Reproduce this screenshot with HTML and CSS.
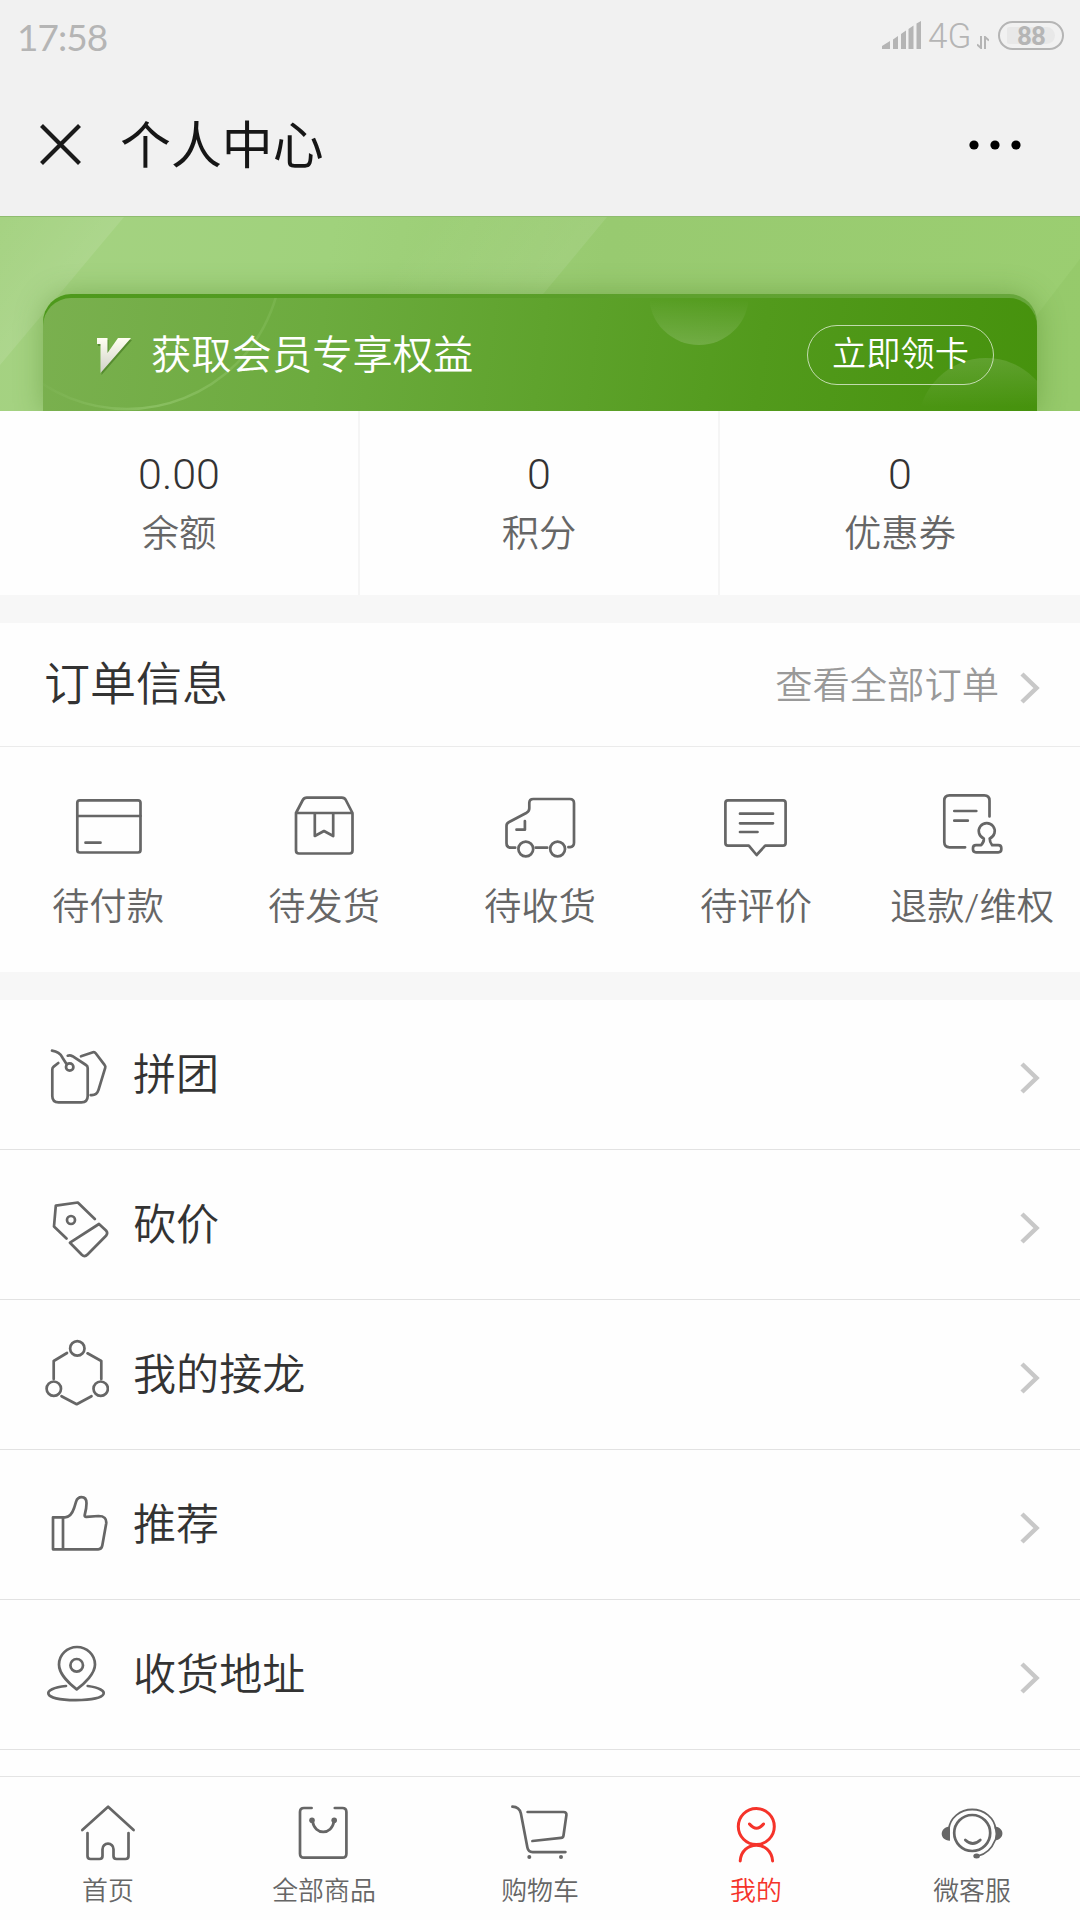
FILE: index.html
```html
<!DOCTYPE html>
<html lang="zh-CN">
<head>
<meta charset="utf-8">
<title>个人中心</title>
<link rel="stylesheet" href="styles.css">
</head>
<body>
<header class="top">
  <div class="status">
    <span class="clock">17:58</span>
    <div class="status-right">
      <svg class="signal" width="40" height="28" viewBox="0 0 40 28"><path d="M0 28v-3l8-5v8zM11 28V18.500l5-3.500v13zM19 28V13l5-3.500V28zM26.500 28V8l5-3.500V28zM34.500 28V2.500L39 0v28z"/></svg>
      <span class="net">4G</span>
      <svg class="updown" width="12" height="13" viewBox="0 0 12 13"><path d="M4 0v12L0 8.500M8 13V1l4 3.500"/></svg>
      <span class="battery"><span class="level">88</span></span>
    </div>
  </div>
  <div class="titlebar">
    <svg class="close" width="41" height="41" viewBox="0 0 41 41"><path d="M1.500 1.500l38 38M39.500 1.500l-38 38"/></svg>
    <h1>个人中心</h1>
    <svg class="more" width="52" height="10" viewBox="0 0 52 10"><circle cx="5" cy="5" r="4.600"/><circle cx="26" cy="5" r="4.600"/><circle cx="47" cy="5" r="4.600"/></svg>
  </div>
</header>

<section class="banner">
  <svg class="banner-art" width="1080" height="195" viewBox="0 0 1080 195">
    <defs>
      <linearGradient id="s1" x1="0" y1="0" x2="1" y2="1"><stop offset="0" stop-color="#fff" stop-opacity="0"/><stop offset=".5" stop-color="#fff" stop-opacity=".1"/></linearGradient>
      <linearGradient id="s2" gradientUnits="userSpaceOnUse" x1="430" y1="0" x2="550" y2="90"><stop offset="0" stop-color="#fff" stop-opacity="0"/><stop offset="1" stop-color="#fff" stop-opacity=".09"/></linearGradient>
    </defs>
    <path d="M0 0h124L0 148z" fill="url(#s1)"/>
    <path d="M350 0h180l-68 82H290z" fill="url(#s2)"/>
    <path d="M530 0h77l-68 82h-77z" fill="url(#s2)"/>
    <path d="M1080 42v153h-60v-75z" fill="#7fb552" fill-opacity=".16"/>
  </svg>
  <div class="card">
    <div class="card-face">
      <svg class="card-art" width="994" height="113" viewBox="0 0 994 113">
        <defs>
          <linearGradient id="c0" gradientUnits="userSpaceOnUse" x1="0" y1="0" x2="245" y2="0"><stop offset="0" stop-color="#a4d480" stop-opacity=".05"/><stop offset=".45" stop-color="#a4d480" stop-opacity=".45"/><stop offset="1" stop-color="#a4d480" stop-opacity=".15"/></linearGradient>
          <linearGradient id="c1" x1="0" y1="0" x2="0" y2="1"><stop offset=".55" stop-color="#fff" stop-opacity="0"/><stop offset="1" stop-color="#fff" stop-opacity=".16"/></linearGradient>
          <linearGradient id="c2" x1="0" y1="0" x2="0" y2="1"><stop offset="0" stop-color="#fff" stop-opacity=".13"/><stop offset=".36" stop-color="#fff" stop-opacity="0"/></linearGradient>
        </defs>
        <circle cx="84" cy="-44" r="155" fill="none" stroke="url(#c0)" stroke-width="2.500"/>
        <circle cx="656" cy="-3" r="50" fill="url(#c1)"/>
        <circle cx="943" cy="128" r="68" fill="url(#c2)"/>
      </svg>
      <svg class="vip" width="38" height="40" viewBox="0 0 38 40">
        <defs><linearGradient id="v" x1="0" y1="0" x2="0" y2="1"><stop offset="0" stop-color="#fffff2"/><stop offset="1" stop-color="#cfd0c8"/></linearGradient></defs>
        <path d="M1 3h10.500v15L22 3h13L4.500 38V9H1z" fill="#3d701b" fill-opacity=".55"/>
        <path d="M0 1h10.500v15L21 1h13L3.500 36V7H0z" fill="url(#v)"/>
      </svg>
      <span class="card-text">获取会员专享权益</span>
      <span class="card-btn">立即领卡</span>
    </div>
  </div>
</section>

<section class="stats">
  <div class="stat"><b>0.00</b><span>余额</span></div>
  <div class="stat"><b>0</b><span>积分</span></div>
  <div class="stat"><b>0</b><span>优惠券</span></div>
</section>

<section class="order-head">
  <h2>订单信息</h2>
  <span class="all">查看全部订单</span>
  <svg class="chev" width="20" height="32" viewBox="0 0 20 32"><path d="M2 2l14.500 14L2 30"/></svg>
</section>
<section class="orders">
  <div class="order">
    <svg class="icon" width="72" height="72" viewBox="0 0 72 72"><rect x="5.300" y="10.300" width="63.200" height="52.200" rx="2.500"/><path d="M5.300 26h63.200M13.500 52.700h15"/></svg>
    <span>待付款</span>
  </div>
  <div class="order">
    <svg class="icon" width="72" height="72" viewBox="0 0 72 72"><path d="M8 23v37.500q0 3 3 3h50.500q3 0 3-3V23M8 23l6.800-13q1.200-2.400 4-2.400h35q2.800 0 4 2.400L64.500 23zM26.800 23v23l9.200-5 9.200 5V23"/></svg>
    <span>待发货</span>
  </div>
  <div class="order">
    <svg class="icon" width="72" height="72" viewBox="0 0 72 72"><path d="M11.200 57.700H7q-4.500 0-4.500-4.500V36q0-2.500 2.200-3.700l18-9.600q2.600-1.600 2.600-4.500V13q0-4 4-4h36.500q4.200 0 4.200 4.200v39.600q0 4-4 4.300l-1.600.1M31.800 57.700h11.400M20.900 31v8.700h-8.400"/><circle cx="21.800" cy="59" r="7.400"/><circle cx="53.600" cy="59" r="7.400"/></svg>
    <span>待收货</span>
  </div>
  <div class="order">
    <svg class="icon" width="72" height="72" viewBox="0 0 72 72"><path d="M8 10.300h55q2.600 0 2.600 2.600V53q0 2.600-2.600 2.600H45.200L36.600 65l-7.800-9.400H8q-2.600 0-2.600-2.600V12.900q0-2.600 2.600-2.600zM20 23.700h33M20 33.300h33M20 42h17.500"/></svg>
    <span>待评价</span>
  </div>
  <div class="order">
    <svg class="icon" width="72" height="72" viewBox="0 0 72 72"><path d="M53.500 26.500V10.500q0-5.200-5.200-5.200H13.500q-5.200 0-5.200 5.200v41.600q0 5.200 5.200 5.200h15.600M18.300 21h22M18.300 30.700h13.500"/><path d="M47.800 48.500q.3 3.500-2.600 6.600H40q-3 0-3 3v1.500q0 2.700 3 2.700h22.300q3 0 3-2.700v-1.500q0-3-3-3h-6.200q-2.400-3-2.400-6.600a8 8 0 1 0-5.900 0z"/></svg>
    <span>退款/维权</span>
  </div>
</section>

<nav class="menu">
  <div class="row">
    <svg class="icon" width="73" height="73" viewBox="0 0 73 73"><path d="M16 12.700q7.500 1 10.500 7l4 6.300M22.300 25l-4.600 3.600q-1.400 1.100-1.400 3V58q0 6.300 6.300 6.300h22.800q6.300 0 6.300-6.300V30q0-2-1.700-3L36.500 18.200q-2.300-1.300-4.800-.5M45 18.300l12-4q1.600-.5 2.700 1l9 11.800q1 1.200.5 2.800l-6.700 22q-1.800 5.800-7.800 5.200"/><circle cx="33.700" cy="29" r="3.700"/></svg>
    <span>拼团</span>
    <svg class="chev" width="20" height="32" viewBox="0 0 20 32"><path d="M2 2l14.500 14L2 30"/></svg>
  </div>
  <div class="row">
    <svg class="icon" width="73" height="73" viewBox="0 0 73 73"><path d="M30.500 50.500L18 38.500l1.800-20.800 22-3.200 17 16.500M34 54.700l29-18.700 7 6.500q2.300 2.500 0 5.300L51.500 66.500q-2.800 3-5.700.3z"/><circle cx="35" cy="32" r="4"/></svg>
    <span>砍价</span>
    <svg class="chev" width="20" height="32" viewBox="0 0 20 32"><path d="M2 2l14.500 14L2 30"/></svg>
  </div>
  <div class="row">
    <svg class="icon" width="73" height="73" viewBox="0 0 73 73"><path d="M31 15l-13.300 8v18M51.500 15.300L65.300 23v18M25.500 58.200l15.200 8 14.800-8"/><circle cx="41.300" cy="10.400" r="7.200"/><circle cx="17.800" cy="50.700" r="7.200"/><circle cx="64.700" cy="50.700" r="7.200"/></svg>
    <span>我的接龙</span>
    <svg class="chev" width="20" height="32" viewBox="0 0 20 32"><path d="M2 2l14.500 14L2 30"/></svg>
  </div>
  <div class="row">
    <svg class="icon" width="73" height="73" viewBox="0 0 73 73"><path d="M17 29.300h12q6 0 9-9l2-6.500Q41.500 9.200 45.500 9.200q5 0 5 6 0 5-1.700 11.500-.6 2.300 1.700 2.100L62.500 28q8.500 0 7.700 7.500l-3.900 22q-.7 3.800-4 3.800H17zM27 29.300v32"/></svg>
    <span>推荐</span>
    <svg class="chev" width="20" height="32" viewBox="0 0 20 32"><path d="M2 2l14.500 14L2 30"/></svg>
  </div>
  <div class="row">
    <svg class="icon" width="73" height="73" viewBox="0 0 73 73"><path d="M40.700 51.300C33 45.500 23 35.500 23 26.500a17.800 17.300 0 0 1 36 0c0 9-10.300 19-18.300 24.800zM30 48C5 50.500 5 62.200 39.700 62.200S75 51 51.700 48"/><circle cx="40.700" cy="27.300" r="6.300"/></svg>
    <span>收货地址</span>
    <svg class="chev" width="20" height="32" viewBox="0 0 20 32"><path d="M2 2l14.500 14L2 30"/></svg>
  </div>
</nav>

<footer class="tabs">
  <div class="tab">
    <svg class="icon" width="72" height="72" viewBox="0 0 72 72"><path d="M10.300 34l25.800-23.300L61.600 34M15.500 37v23q0 3 3 3h9q3 0 3-3v-6.800a5.500 5.500 0 0 1 11 0V60q0 3 3 3h9q3 0 3-3V37"/></svg>
    <span>首页</span>
  </div>
  <div class="tab">
    <svg class="icon" width="72" height="72" viewBox="0 0 72 72"><path d="M23.600 12H16q-4 0-4 4v41.700q0 4 4 4h38.400q4 0 4-4V16q0-4-4-4h-7.600M24.500 25c2 14.500 19.500 14.500 21.500 0"/><g class="fill"><circle cx="24" cy="24.300" r="2.800"/><circle cx="46.200" cy="24.300" r="2.800"/></g></svg>
    <span>全部商品</span>
  </div>
  <div class="tab">
    <svg class="icon" width="72" height="72" viewBox="0 0 72 72"><path d="M8.400 10.700q7 .3 8.500 6.800l6.500 34q.9 4.600 5.300 4.600h32.700M23.600 16h36q3.200 0 2.800 3.200L59.500 39.500q-.3 2.200-2.500 2.400L28.400 45"/><g class="fill"><circle cx="25.300" cy="61" r="2"/><circle cx="57" cy="61" r="2"/></g></svg>
    <span>购物车</span>
  </div>
  <div class="tab active">
    <svg class="icon" width="72" height="72" viewBox="0 0 72 72"><circle cx="36.300" cy="30.500" r="18"/><path d="M29.500 28q7 8.500 14 0M20.200 65c1.500-21 30.700-21 32.400 0"/></svg>
    <span>我的</span>
  </div>
  <div class="tab">
    <svg class="icon" width="72" height="72" viewBox="0 0 72 72"><circle cx="36.200" cy="37" r="18"/><path class="thin" d="M12.800 33a23.500 21.500 0 0 1 46.800 0M59 44.500Q54 57 42 60"/><path d="M29.300 44q7.500 7 15 0"/><g class="fill"><path d="M14 30.500v14.200C3 44.500 3 31 14 30.500zM58.600 30.500c10.500 1 10.500 13 0 14.200q1.800-7 0-14.200z"/><ellipse cx="40.600" cy="60" rx="3.300" ry="2.500"/></g></svg>
    <span>微客服</span>
  </div>
</footer>
</body>
</html>
```

FILE: styles.css
```css
* { box-sizing: border-box; margin: 0; padding: 0; }

body {
  width: 1080px;
  height: 1920px;
  overflow: hidden;
  display: flex;
  flex-direction: column;
  background: #fefefe;
  color: #333;
  font-family: "Roboto", "Noto Sans CJK SC", sans-serif;
  font-weight: 350;
}

svg { display: block; flex: none; }
span, h1, h2, b { white-space: nowrap; }

/* system bar and page title */
.top { height: 216px; background: #f1f1f1; }

.status {
  height: 72px;
  padding: 0 16px 0 17px;
  display: flex;
  align-items: center;
  justify-content: space-between;
  color: #b5b5b5;
}
.clock { font: 400 37px/46px "Lato", sans-serif; letter-spacing: -1px; margin-top: 2px; }
.status-right { display: flex; height: 72px; align-items: flex-start; }
.signal { margin-top: 21px; fill: #b5b5b5; }
.net { margin: 16px 0 0 6px; font: 350 35px/42px "Roboto", sans-serif; width: 44px; }
.updown { margin: 36px 0 0 5px; fill: none; stroke: #b5b5b5; stroke-width: 2; }
.battery {
  margin: 21px 0 0 9px;
  width: 66px;
  height: 29px;
  padding: 4px 7px;
  border: 2.5px solid #b5b5b5;
  border-radius: 15px;
}
.level {
  display: block;
  height: 17px;
  border-radius: 2px 9px 9px 2px;
  background: #e8e8e8;
  font: 700 26px/18px "Roboto", sans-serif;
  letter-spacing: -1px;
  text-align: center;
}

.titlebar { height: 144px; display: flex; align-items: center; padding: 0 59px 0 40px; }
.close { fill: none; stroke: #1a1a1a; stroke-width: 4.2; }
.titlebar h1 {
  margin: 6px 0 0 39px;
  font-size: 50.9px;
  line-height: 60px;
  font-weight: 370;
  color: #161616;
  flex: 1;
}
.more { margin-top: 2px; }

/* membership banner */
.banner {
  position: relative;
  height: 195px;
  padding: 77px 43px 0;
  overflow: hidden;
  border-top: 1px solid #8fbc6f;
  background: linear-gradient(100deg, #a5d282 0%, #a0d27c 30%, #98ca70 55%, #9bce71 100%);
}
.banner-art { position: absolute; left: 0; top: 0; }
.card {
  position: relative;
  height: 118px;
  padding-top: 4px;
  border-radius: 28px 28px 0 0;
  background: linear-gradient(90deg, #4d991b, #5b9f2a 55%, #68a73c);
  box-shadow: 0 0 28px rgba(72, 128, 30, .4);
}
.card-face {
  position: relative;
  height: 113px;
  overflow: hidden;
  border-radius: 28px 28px 0 0;
  background: linear-gradient(97deg, #7ab04f 0%, #6cab3e 28%, #5fa32d 50%, #529a1c 72%, #46920d 100%);
  display: flex;
  align-items: center;
  padding: 0 43px 0 54px;
  color: #fff;
}
.card-art { position: absolute; left: 0; top: 0; }
.vip { position: relative; margin-top: 4px; }
.card-text { position: relative; margin: 2px 0 0 16px; font-size: 40.3px; line-height: 56px; flex: 1; }
.card-btn {
  position: relative;
  width: 187px;
  height: 60px;
  border: 1.5px solid rgba(255, 255, 255, .65);
  border-radius: 30px;
  font-size: 34.2px;
  line-height: 57px;
  text-align: center;
}

/* balance, points, coupons */
.stats { height: 184px; display: grid; grid-template-columns: repeat(3, 1fr); }
.stat { display: flex; flex-direction: column; align-items: center; padding-top: 38px; border-right: 2px solid #f5f5f5; }
.stat:last-child { border-right: 0; }
.stat b { font-size: 43px; line-height: 50px; font-weight: 300; }
.stat span { margin-top: 8px; font-size: 37.3px; line-height: 54px; color: #666; }

/* orders */
.order-head {
  height: 152px;
  border-top: 28px solid #f7f7f7;
  border-bottom: 1px solid #ebebeb;
  padding: 0 40px 0 44px;
  display: flex;
  align-items: center;
}
.order-head h2 { flex: 1; font-size: 46px; line-height: 60px; font-weight: 350; margin-top: -1px; }
.all { font-size: 37.3px; line-height: 54px; color: #999; margin-top: 2px; }
.chev { fill: none; stroke: #c8c8c8; stroke-width: 4.5; }
.order-head .chev { margin: 6px 0 0 21px; }

.orders {
  height: 253px;
  border-bottom: 28px solid #f7f7f7;
  display: grid;
  grid-template-columns: repeat(5, 1fr);
  padding-top: 43px;
}
.order, .tab { display: flex; flex-direction: column; align-items: center; }
.order span { margin-top: 18px; font-size: 37.3px; line-height: 54px; color: #666; }

.icon { fill: none; stroke: #666; stroke-width: 2.7; stroke-linecap: round; stroke-linejoin: round; }
.icon .fill { fill: #666; stroke: none; }
.icon .thin { stroke-width: 1.8; }

/* feature list */
.menu { height: 776px; }
.row {
  height: 150px;
  border-bottom: 1px solid #e2e2e2;
  padding: 0 40px 0 36px;
  display: flex;
  align-items: center;
}
.row span { flex: 1; margin: 2px 0 0 24px; font-size: 43.1px; line-height: 60px; }
.row .chev { margin-top: 6px; }

/* bottom navigation */
.tabs {
  height: 144px;
  border-top: 1px solid #e4e4e4;
  display: grid;
  grid-template-columns: repeat(5, 1fr);
  padding-top: 19px;
}
.tab span { margin-top: 5px; font-size: 25.9px; line-height: 36px; color: #666; }
.tab.active span { color: #f5332a; }
.tab.active .icon { stroke: #f5332a; stroke-width: 3; }
```
